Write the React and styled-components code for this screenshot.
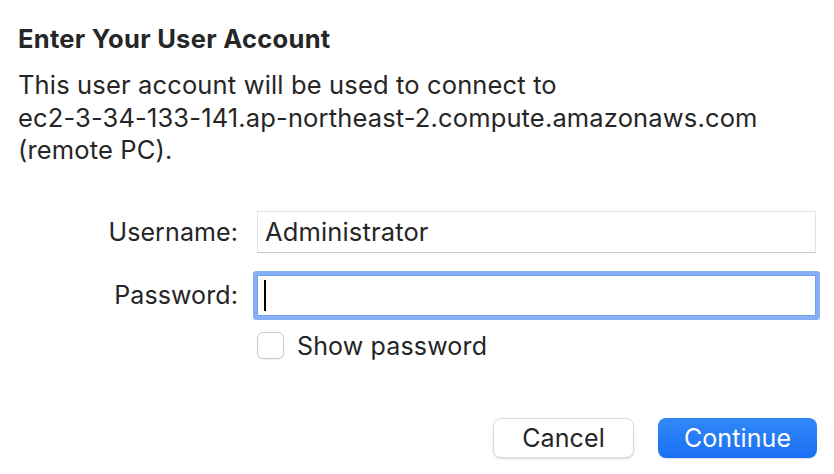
import React from "react";
import styled, { createGlobalStyle } from "styled-components";

// login prompt for the remote desktop connection
const GlobalStyle = createGlobalStyle`
  html, body {
    margin: 0;
    padding: 0;
    background: #ffffff;
  }
  body {
    font-family: Inter, "Liberation Sans", sans-serif;
    color: #262626;
    -webkit-font-smoothing: antialiased;
  }
`;

const Dialog = styled.div`
  width: 834px;
  height: 474px;
  box-sizing: border-box;
  padding: 25px 17px 0 18px;
  display: flex;
  flex-direction: column;
`;

const Title = styled.h1`
  margin: 0;
  font-size: 25.5px;
  font-weight: 700;
  line-height: 28px;
  letter-spacing: 0.3px;
`;

const Message = styled.p`
  margin: 16px 0 0;
  font-size: 25.5px;
  line-height: 32.5px;
  font-weight: 400;
  letter-spacing: 0.15px;
`;

const Form = styled.div`
  margin-top: 44px;
  display: grid;
  grid-template-columns: 220px 559px;
  column-gap: 19px;
  row-gap: 22px;
  align-items: center;
`;

const Label = styled.label`
  text-align: right;
  font-size: 25px;
  letter-spacing: 0.1px;
`;

const Field = styled.input`
  box-sizing: border-box;
  height: ${(p) => (p.focused ? "41px" : "42px")};
  width: 100%;
  padding: 0 7px;
  font-family: inherit;
  font-size: 25.5px;
  letter-spacing: 0.15px;
  color: #262626;
  background: #fff;
  border: 1px solid ${(p) => (p.focused ? "#6f9fe8" : "#e2e2e2")};
  border-bottom-color: ${(p) => (p.focused ? "#6f9fe8" : "#c6c6c6")};
  outline: none;
  box-shadow: ${(p) => (p.focused ? "0 0 0 4px #86b0f3" : "none")};
  border-radius: ${(p) => (p.focused ? "1px" : "0")};
`;

const Caret = styled.span`
  position: absolute;
  left: 7px;
  top: 5px;
  width: 2px;
  height: 31px;
  background: #000;
`;

const FieldWrap = styled.div`
  position: relative;
`;

const CheckRow = styled.label`
  grid-column: 2;
  margin-top: -7px;
  display: flex;
  align-items: center;
  gap: 13px;
  font-size: 25px;
  letter-spacing: 0.15px;
`;

const Box = styled.span`
  width: 25px;
  height: 25px;
  border: 1px solid #c9c9c9;
  border-radius: 6px;
  background: #fff;
  box-shadow: 0 1px 1px rgba(0, 0, 0, 0.06);
`;

const Actions = styled.div`
  margin-top: auto;
  margin-bottom: 16px;
  display: flex;
  justify-content: flex-end;
  gap: 24px;
`;

const Button = styled.button`
  height: 40px;
  width: ${(p) => (p.primary ? "159px" : "141px")};
  border-radius: 8px;
  font-family: inherit;
  font-size: 25px;
  letter-spacing: 0.1px;
  cursor: pointer;
  color: ${(p) => (p.primary ? "#fff" : "#262626")};
  background: ${(p) =>
    p.primary ? "linear-gradient(#3088f7, #1c70f5)" : "#fff"};
  border: ${(p) => (p.primary ? "none" : "1px solid #dcdcdc")};
  box-shadow: ${(p) =>
    p.primary
      ? "0 1px 1px rgba(0, 0, 0, 0.12)"
      : "0 1px 2px rgba(0, 0, 0, 0.15)"};
`;

export default function App() {
  return (
    <>
      <GlobalStyle />
      <Dialog>
        <Title>Enter Your User Account</Title>
        <Message>
          This user account will be used to connect to
          <br />
          ec2-3-34-133-141.ap-northeast-2.compute.amazonaws.com
          <br />
          (remote PC).
        </Message>
        <Form>
          <Label>Username:</Label>
          <Field defaultValue="Administrator" />
          <Label>Password:</Label>
          <FieldWrap>
            <Field type="password" focused />
            <Caret />
          </FieldWrap>
          <CheckRow>
            <Box />
            Show password
          </CheckRow>
        </Form>
        <Actions>
          <Button>Cancel</Button>
          <Button primary>Continue</Button>
        </Actions>
      </Dialog>
    </>
  );
}
